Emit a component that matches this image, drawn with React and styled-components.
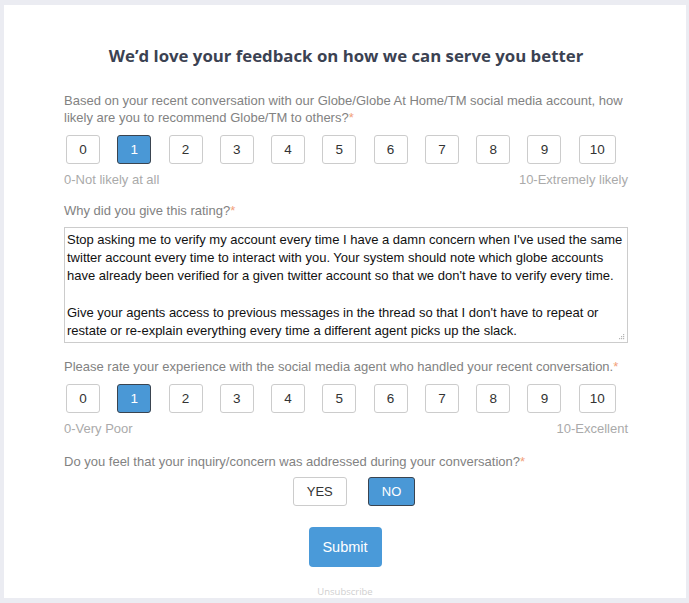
import styled, { createGlobalStyle } from 'styled-components';

const Global = createGlobalStyle`
  html, body {
    margin: 0;
    padding: 0;
    background: #ebecf2;
  }
  body {
    font-family: "Liberation Sans", Arial, sans-serif;
  }
`

const Page = styled.div`
  padding: 5px 3px 5px 4px;
`

const Card = styled.div`
  background: #fff;
  height: 593px;
  box-sizing: border-box;
  padding: 39px 58px 0 60px;
  display: flex;
  flex-direction: column;
`

const Title = styled.h1`
  margin: 0 0 23.5px;
  text-align: center;
  font-family: "Open Sans", sans-serif;
  font-weight: 700;
  font-size: 16.8px;
  line-height: 24px;
  color: #3b4252;
`

const Question = styled.p`
  margin: 0;
  font-size: 13px;
  line-height: 17px;
  color: #828282;
`

const Star = styled.span`
  color: #f2a07a;
`

const Scale = styled.div`
  display: grid;
  grid-template-columns: repeat(11, 1fr);
  margin-top: ${p => p.$top}px;
`

const Choice = styled.button`
  justify-self: start;
  margin-left: 2px;
  min-width: 34px;
  height: 29px;
  padding: 0 10px;
  box-sizing: border-box;
  border-radius: 3px;
  border: 1px solid ${p => (p.$on ? '#3a4450' : '#cccccc')};
  background: ${p => (p.$on ? '#4a98d6' : '#fff')};
  color: ${p => (p.$on ? '#fff' : '#333')};
  font-family: "Liberation Sans", Arial, sans-serif;
  font-size: 13.5px;
`

const Ends = styled.div`
  display: flex;
  justify-content: space-between;
  margin-top: 7px;
  font-size: 13px;
  line-height: 17px;
  color: #aaaaaa;
`

const Gap = styled.div`
  height: ${p => p.$h}px;
`

const CommentBox = styled.div`
  position: relative;
  margin-top: 7.5px;
  width: 564px;
`

const Comment = styled.textarea`
  display: block;
  width: 564px;
  height: 116px;
  box-sizing: border-box;
  margin: 0;
  padding: 3px 2px;
  border: 1px solid #cccccc;
  border-radius: 0;
  font-family: "Liberation Sans", Arial, sans-serif;
  font-size: 13px;
  line-height: 18.3px;
  color: #111;
  resize: none;
  overflow: hidden;
`

const Grip = styled.svg`
  position: absolute;
  right: 3px;
  bottom: 3px;
  width: 7px;
  height: 7px;
`

const YesNo = styled.div`
  display: flex;
  justify-content: center;
  gap: 21px;
  margin-top: 7.5px;
  margin-left: 16px;
`

const Toggle = styled.button`
  height: 29px;
  padding: 0 13px;
  box-sizing: border-box;
  border-radius: 3px;
  border: 1px solid ${p => (p.$on ? '#3a4450' : '#cccccc')};
  background: ${p => (p.$on ? '#4a98d6' : '#fff')};
  color: ${p => (p.$on ? '#fff' : '#333')};
  font-family: "Liberation Sans", Arial, sans-serif;
  font-size: 13px;
`

const Submit = styled.button`
  align-self: center;
  margin-top: 21px;
  margin-left: -2px;
  width: 73px;
  height: 40px;
  border: none;
  border-radius: 4px;
  background: #4a9ad9;
  color: #fff;
  font-family: "Liberation Sans", Arial, sans-serif;
  font-size: 14.5px;
`

const Unsub = styled.div`
  text-align: center;
  margin-top: 18px;
  margin-left: -2px;
  font-family: "Open Sans", sans-serif;
  font-size: 9.5px;
  color: #cfcfcf;
`

const nums = [0, 1, 2, 3, 4, 5, 6, 7, 8, 9, 10]

const RatingRow = ({ value, low, high, top }) => (
  <>
    <Scale $top={top}>
      {nums.map(n => (
        <Choice key={n} $on={n === value}>{n}</Choice>
      ))}
    </Scale>
    <Ends>
      <span>{low}</span>
      <span>{high}</span>
    </Ends>
  </>
)

const text = `Stop asking me to verify my account every time I have a damn concern when I've used the same twitter account every time to interact with you. Your system should note which globe accounts have already been verified for a given twitter account so that we don't have to verify every time.

Give your agents access to previous messages in the thread so that I don't have to repeat or restate or re-explain everything every time a different agent picks up the slack.`

export default function App() {
  return (
    <Page>
      <Global />
      <Card>
        <Title>We’d love your feedback on how we can serve you better</Title>
        <Question>
          Based on your recent conversation with our Globe/Globe At Home/TM social media account, how likely are you to recommend Globe/TM to others?<Star>*</Star>
        </Question>
        <RatingRow value={1} top={9.5} low="0-Not likely at all" high="10-Extremely likely" />
        <Gap $h={14} />
        <Question>Why did you give this rating?<Star>*</Star></Question>
        <CommentBox>
          <Comment defaultValue={text} />
          <Grip viewBox="0 0 7 7">
            <g fill="#b5b5b5">
              <rect x="5" y="1" width="1.2" height="1.2" />
              <rect x="3" y="3" width="1.2" height="1.2" />
              <rect x="5" y="3" width="1.2" height="1.2" />
              <rect x="1" y="5" width="1.2" height="1.2" />
              <rect x="3" y="5" width="1.2" height="1.2" />
              <rect x="5" y="5" width="1.2" height="1.2" />
            </g>
          </Grip>
        </CommentBox>
        <Gap $h={15.5} />
        <Question>
          Please rate your experience with the social media agent who handled your recent conversation.<Star>*</Star>
        </Question>
        <RatingRow value={1} top={8.5} low="0-Very Poor" high="10-Excellent" />
        <Gap $h={16} />
        <Question>
          Do you feel that your inquiry/concern was addressed during your conversation?<Star>*</Star>
        </Question>
        <YesNo>
          <Toggle>YES</Toggle>
          <Toggle $on>NO</Toggle>
        </YesNo>
        <Submit>Submit</Submit>
        <Unsub>Unsubscribe</Unsub>
      </Card>
    </Page>
  )
}
